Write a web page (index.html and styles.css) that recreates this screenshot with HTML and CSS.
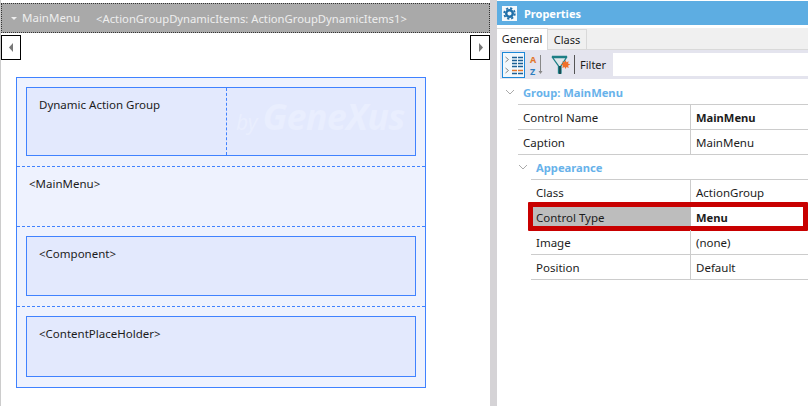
FILE: index.html
```html
<!DOCTYPE html>
<html lang="en">
<head>
  <meta charset="UTF-8" />
  <title>MainMenu Properties</title>
  <link rel="stylesheet" href="styles.css">
</head>
<body>
  <div class="editor">
    <div class="editor-head">
      <svg class="caret" width="8" height="5" viewBox="0 0 8 5"><path d="M1 1h6L4 4z" fill="#eee"/></svg>
      <span class="editor-title">MainMenu</span>
      <span class="editor-sub">&lt;ActionGroupDynamicItems: ActionGroupDynamicItems1&gt;</span>
    </div>
    <div class="nav-row">
      <div class="nav-btn"><svg width="5" height="9" viewBox="0 0 5 9"><path d="M4 0v9L0 4.500z" fill="#777"/></svg></div>
      <div class="nav-btn"><svg width="5" height="9" viewBox="0 0 5 9"><path d="M1 0v9l4-4.500z" fill="#777"/></svg></div>
    </div>
    <div class="layout-box">
      <div class="layout-row">
        <div class="cell cell-split h69">
          <div class="cell-left">Dynamic Action Group</div>
          <div class="cell-right"><span class="by">by</span><span class="brand">GeneXus</span></div>
        </div>
      </div>
      <div class="layout-row plain">&lt;MainMenu&gt;</div>
      <div class="layout-row">
        <div class="cell h60">&lt;Component&gt;</div>
      </div>
      <div class="layout-row last">
        <div class="cell h61">&lt;ContentPlaceHolder&gt;</div>
      </div>
    </div>
  </div>

  <div class="splitter"></div>

  <div class="props">
    <div class="props-head">
      <span class="props-icon">
        <svg width="13" height="13" viewBox="0 0 13 13">
          <circle cx="6.500" cy="6.500" r="3.300" fill="none" stroke="#1f6fa8" stroke-width="2.400"/>
          <circle cx="6.500" cy="6.500" r="5.300" fill="none" stroke="#1f6fa8" stroke-width="1.800" stroke-dasharray="2.200 1.960"/>
        </svg>
      </span>
      <span class="props-title">Properties</span>
    </div>
    <div class="tabs">
      <div class="tab active">General</div>
      <div class="tab">Class</div>
    </div>
    <div class="toolbar">
      <div class="tool-btn on">
        <svg width="21" height="24" viewBox="0 0 21 24">
          <path d="M2.500 4l3 2.500-3 2.500M2.500 15l3 2.500-3 2.500" fill="none" stroke="#888" stroke-width="1"/>
          <path d="M9 4.500h11M9 7.500h11M9 10.500h11M9 13.500h11" stroke="#1c5f94" stroke-width="1.500" stroke-dasharray="5 1"/>
          <path d="M9 17.500h11" stroke="#e2762c" stroke-width="1.500" stroke-dasharray="5 1"/>
          <path d="M9 20.500h11" stroke="#1c5f94" stroke-width="1.500" stroke-dasharray="5 1"/>
        </svg>
      </div>
      <div class="tool-btn">
        <svg width="20" height="24" viewBox="0 0 20 24">
          <text x="2" y="10" class="az-a">A</text>
          <text x="2" y="22" class="az-z">Z</text>
          <path d="M12.500 2v18" stroke="#888" stroke-width="1"/>
          <path d="M10.500 18h4l-2 3z" fill="#888"/>
        </svg>
      </div>
      <div class="tool-btn last">
        <svg width="20" height="24" viewBox="0 0 20 24">
          <path d="M1.500 4.500h14L10 13v7H7.500v-7z" fill="#dfe6ea" stroke="#1d7f86" stroke-width="1.300"/>
          <path d="M1 3.500h15" stroke="#1d7f86" stroke-width="1.500"/>
          <path d="M8 13h2v8H8z" fill="#1a4f55"/>
          <path d="M14.500 7l1 2.300 2.200-1-.700 2.300 2.300 1-2.200 1 .600 2.400-2.200-1.100-1 2.100-1-2.100-2.200 1.100.600-2.400-2.200-1 2.300-1-.700-2.300 2.200 1z" fill="#f0702a"/>
        </svg>
      </div>
      <div class="tool-sep"></div>
      <div class="filter-label">Filter</div>
      <div class="filter-input"></div>
    </div>

    <div class="section">
      <svg class="chev" width="10" height="6" viewBox="0 0 10 6"><path d="M1 1l4 4 4-4" fill="none" stroke="#aaa"/></svg>
      <span>Group: MainMenu</span>
    </div>
    <div class="row lvl1"><div class="name">Control Name</div><div class="val bold">MainMenu</div></div>
    <div class="row lvl1"><div class="name">Caption</div><div class="val">MainMenu</div></div>
    <div class="section sub">
      <svg class="chev" width="10" height="6" viewBox="0 0 10 6"><path d="M1 1l4 4 4-4" fill="none" stroke="#aaa"/></svg>
      <span>Appearance</span>
    </div>
    <div class="row lvl2"><div class="name">Class</div><div class="val">ActionGroup</div></div>
    <div class="row lvl2 selected">
      <div class="name">Control Type</div><div class="val bold">Menu</div>
      <div class="red-mark"></div>
    </div>
    <div class="row lvl2"><div class="name">Image</div><div class="val">(none)</div></div>
    <div class="row lvl2"><div class="name">Position</div><div class="val">Default</div></div>
  </div>
</body>
</html>
```

FILE: styles.css
```css
body {
  margin: 0;
  height: 406px;
  overflow: hidden;
  display: flex;
  background: white;
  font-family: "Noto Sans", sans-serif;
  font-size: 11.500px;
  color: #1c1c1c;
}

/* left side */
.editor {
  width: 489px;
  padding-top: 3px;
  border-left: 1px solid #ccc;
  flex: none;
}
.editor-head {
  height: 28px;
  border: 1px dotted #333;
  background: #a9a9a9;
  color: #eee;
  display: flex;
  align-items: center;
}
.caret {
  margin-left: 8px;
}
.editor-title {
  margin-left: 4px;
  font-size: 11.500px;
  position: relative;
  top: -1px;
}
.editor-sub {
  margin-left: 16px;
  font-size: 11.250px;
}
.nav-row {
  display: flex;
  justify-content: space-between;
  margin-top: 2px;
  height: 25px;
}
.nav-btn {
  width: 18px;
  height: 23px;
  border: 1px solid black;
  display: flex;
  align-items: center;
  justify-content: center;
}
.layout-box {
  width: 408px;
  margin: 17px 0 0 15px;
  border: 1px solid #4082ff;
  background: #eef2fe;
}
.layout-row {
  padding: 9px 9px 10px;
  border-bottom: 1px dashed #4082ff;
}
.layout-row.plain {
  padding: 8px 12px 0;
  box-sizing: border-box;
  height: 60px;
  line-height: 18px;
}
.layout-row.last {
  border-bottom: none;
}
.cell {
  border: 1px solid #4082ff;
  background: #e3e9fd;
  padding: 8px 12px;
  box-sizing: border-box;
  line-height: 18px;
}
.h69 { height: 69px; }
.h60 { height: 60px; }
.h61 { height: 61px; }
.cell-split {
  display: flex;
  padding: 0;
}
.cell-left {
  width: 200px;
  padding: 8px 12px;
  box-sizing: border-box;
  border-right: 1px dashed #4082ff;
}
.cell-right {
  flex: 1;
  padding: 13px 0 0 9px;
  color: #e9eefe;
  font-style: italic;
  white-space: nowrap;
  line-height: 32px;
}
.by {
  font-size: 21px;
  margin-right: 5px;
}
.brand {
  font-size: 36px;
  font-weight: bold;
  letter-spacing: -0.800px;
}

.splitter {
  width: 7px;
  flex: none;
  background: #d5d3d6;
}

/* properties panel */
.props {
  flex: 1;
  min-width: 0;
  padding-top: 1px;
}
.props-head {
  height: 24px;
  background: #5dade2;
  display: flex;
  align-items: center;
  color: white;
  font-weight: bold;
  font-size: 11px;
}
.props-icon {
  width: 15px;
  height: 15px;
  margin-left: 5px;
  background: #f4f8fb;
  display: flex;
  align-items: center;
  justify-content: center;
}
.props-title {
  margin-left: 7px;
}
.tabs {
  margin-top: 3px;
  height: 21px;
  display: flex;
  align-items: flex-end;
  background: #f0f0f0;
  border-bottom: 1px solid #d9d9d9;
}
.tab {
  height: 19px;
  width: 38px;
  border: 1px solid #d9d9d9;
  border-bottom: none;
  text-align: center;
  line-height: 20px;
  font-size: 11px;
}
.tab.active {
  height: 21px;
  width: 50px;
  background: white;
  border-left: none;
  margin-bottom: -1px;
  position: relative;
}
.tab.active + .tab {
  border-left: none;
}
.toolbar {
  margin-left: 3px;
  height: 29px;
  background: #e4e4ee;
  display: flex;
  align-items: center;
  padding-left: 2px;
}
.tool-btn {
  width: 20px;
  height: 24px;
  margin-right: 1px;
  border: 1px solid transparent;
  display: flex;
  align-items: center;
  justify-content: center;
}
.tool-btn.on {
  width: 21px;
  background: #f2f7fc;
  border-color: #1e88d8;
  margin-right: 2px;
}
.tool-btn.last {
  margin-right: 0;
}
.az-a {
  font-size: 9px;
  font-weight: bold;
  fill: #e2762c;
}
.az-z {
  font-size: 9px;
  font-weight: bold;
  fill: #2d7fc0;
}
.tool-sep {
  width: 1px;
  height: 19px;
  margin-left: 2px;
  background: #555;
}
.filter-label {
  margin-left: 5px;
  width: 33px;
  font-size: 11px;
}
.filter-input {
  flex: 1;
  height: 23px;
  background: white;
}

.section {
  margin-top: 1px;
  height: 24px;
  margin-left: 21px;
  border-bottom: 1px solid #ccc;
  display: flex;
  align-items: center;
  font-weight: bold;
  font-size: 11.200px;
  color: #68b2ea;
  position: relative;
  padding-left: 5px;
}
.section .chev {
  position: absolute;
  left: -13px;
  top: 9px;
}
.section.sub {
  margin-top: 0;
  margin-left: 34px;
}
.row {
  height: 24px;
  display: flex;
  border-bottom: 1px solid #ccc;
  position: relative;
  line-height: 25px;
}
.lvl1 {
  margin-left: 21px;
}
.lvl2 {
  margin-left: 34px;
}
.name {
  flex: none;
  box-sizing: border-box;
  padding-left: 5px;
  border-right: 1px solid #ccc;
}
.lvl1 .name {
  width: 173px;
}
.lvl2 .name {
  width: 160px;
}
.val {
  padding-left: 5px;
}
.bold {
  font-weight: bold;
  font-size: 11.200px;
}
.selected .name {
  background: #bdbdbd;
  border-right: none;
}
.red-mark {
  position: absolute;
  top: -3px;
  bottom: -2px;
  left: -3px;
  right: 0;
  border: 5px solid #c80000;
  border-radius: 1px;
}
```
